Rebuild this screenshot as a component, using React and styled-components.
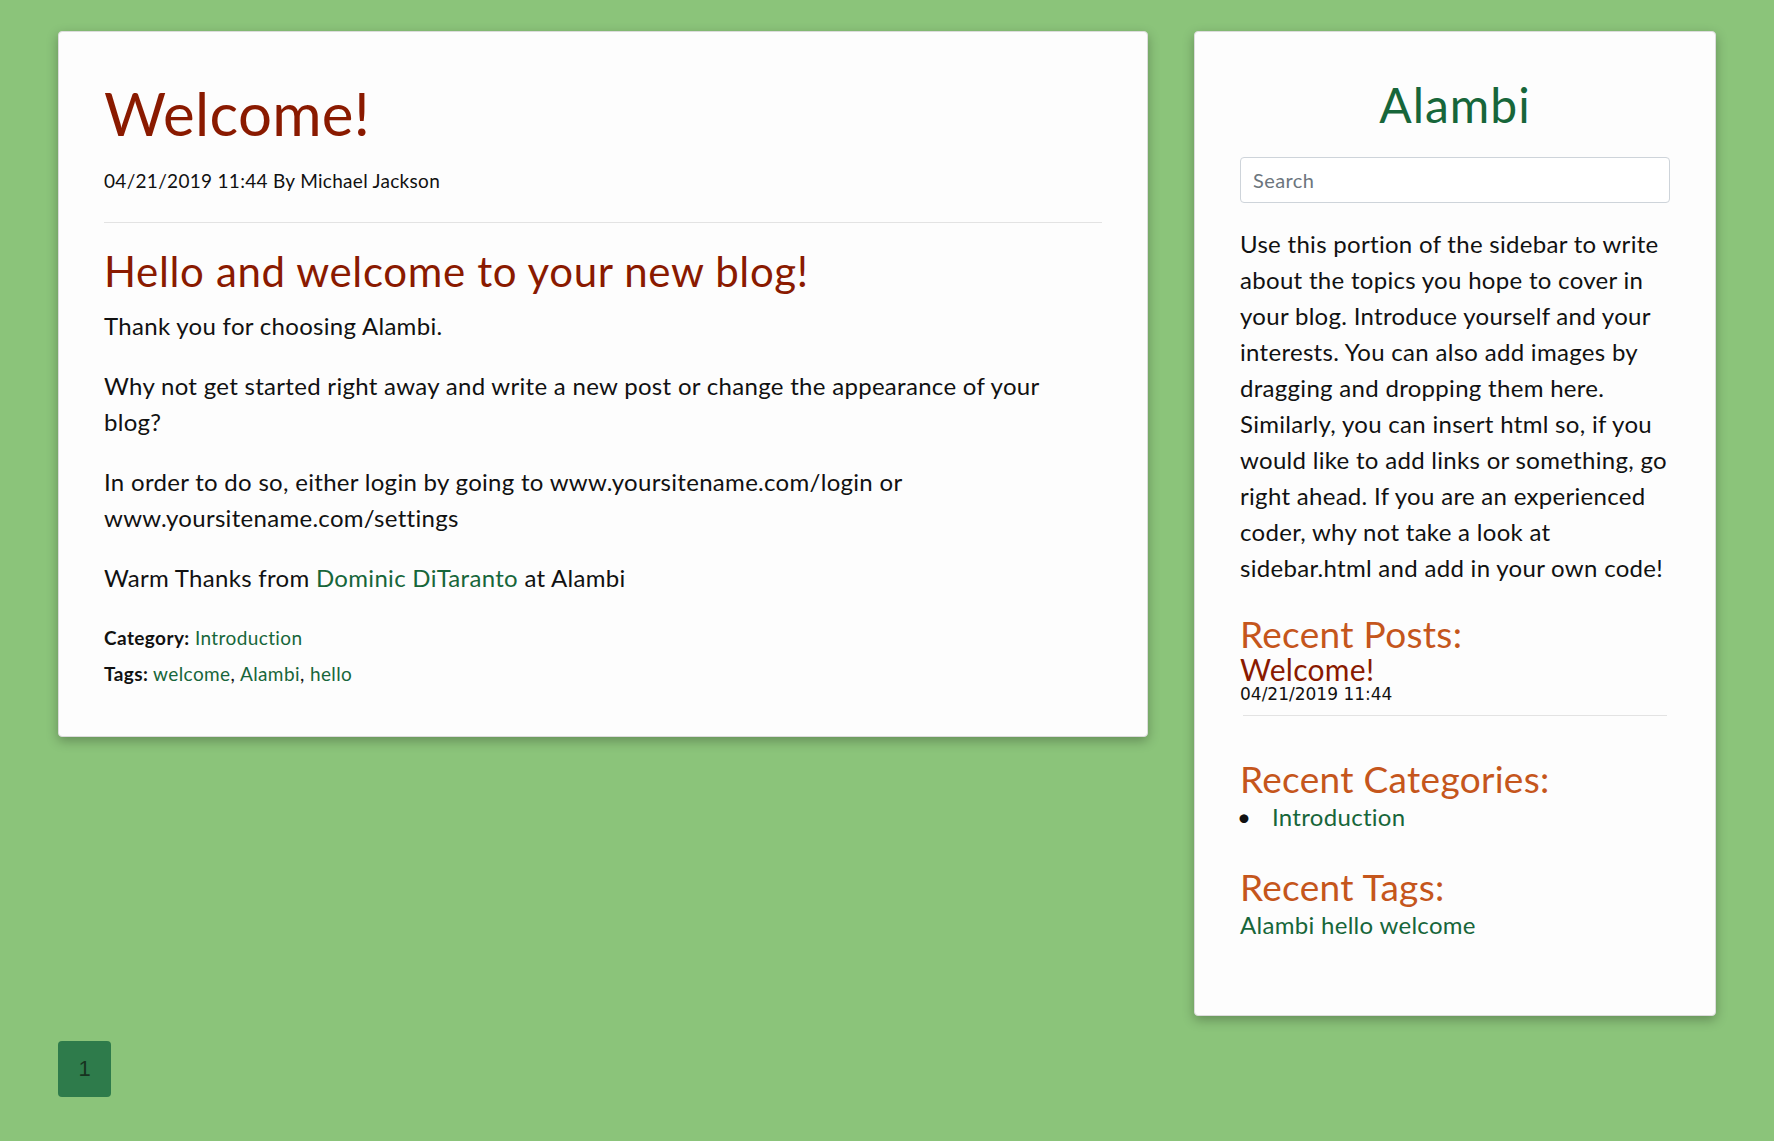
import React from "react";
import styled, { createGlobalStyle } from "styled-components";

const GlobalStyle = createGlobalStyle`
  body {
    margin: 0;
    background-color: #8bc47a;
    font-family: Lato, "Open Sans", sans-serif;
    letter-spacing: 0.3px;
    color: #111;
  }
`;

const Page = styled.div`
  padding: 31px 58px 40px;
`;

const Row = styled.div`
  display: flex;
  align-items: flex-start;
  gap: 46px;
`;

const Card = styled.div`
  box-sizing: border-box;
  background-color: #fdfdfd;
  border: 1px solid #dcdcdc;
  border-radius: 4px;
  box-shadow: 0 4px 12px rgba(0, 0, 0, 0.28);
  padding: 45px 45px 44px;
`;

const PostCard = styled(Card)`
  width: 1090px;
`;

const SideCard = styled(Card)`
  width: 522px;
  padding-bottom: 72px;
`;

const Title = styled.h1`
  margin: 0 0 18px;
  font-size: 60px;
  font-weight: 400;
  line-height: 72px;
  color: #8a1a00;
`;

const Meta = styled.div`
  font-size: 19px;
  line-height: 27px;
`;

const Rule = styled.hr`
  border: 0;
  border-top: 1px solid #e3e3e3;
  margin: ${(p) => p.$margin || "28px 0 23px"};
`;

const Subtitle = styled.h2`
  margin: 0 0 12px;
  font-size: 42px;
  font-weight: 400;
  line-height: 50px;
  letter-spacing: 0.65px;
  color: #8a1a00;
`;

const Text = styled.p`
  margin: 0 0 24px;
  font-size: 24px;
  line-height: 36px;
`;

const Link = styled.a`
  color: #17663a;
  text-decoration: none;
`;

const Info = styled.div`
  font-size: 19px;
  line-height: 36px;
  letter-spacing: 0.4px;
  margin-top: ${(p) => p.$top || 0}px;

  b {
    font-weight: 700;
  }
`;

const BrandTitle = styled.h1`
  margin: 0 0 24px;
  text-align: center;
  font-size: 48px;
  font-weight: 400;
  line-height: 56px;
  letter-spacing: 1px;
  color: #17663a;
`;

const Search = styled.input`
  box-sizing: border-box;
  display: block;
  width: 100%;
  height: 46px;
  padding: 0 12px;
  border: 1px solid #ced4da;
  border-radius: 4px;
  background: #fff;
  font-family: inherit;
  font-size: 20px;
  letter-spacing: 0.4px;
  color: #333;

  &::placeholder {
    color: #6c757d;
  }
`;

const SideText = styled(Text)`
  margin: 23px 0 0;
`;

const SideHeading = styled.h3`
  margin: ${(p) => p.$top}px 0 0;
  font-size: 37px;
  font-weight: 400;
  line-height: 41px;
  color: #c5561c;
`;

const RecentTitle = styled.div`
  font-size: 30px;
  line-height: 30px;
  color: #8a1a00;
`;

const RecentDate = styled.div`
  font-family: "DejaVu Sans", sans-serif;
  font-size: 17px;
  line-height: 20px;
  letter-spacing: 0;
`;

const CatList = styled.ul`
  margin: 0;
  padding: 0;
  list-style: none;
  font-size: 24px;
  line-height: 36px;
`;

const CatItem = styled.li`
  display: flex;

  &::before {
    content: "•";
    width: 32px;
    flex: none;
    margin-left: -3px;
    padding-right: 3px;
  }
`;

const TagLine = styled.div`
  font-size: 24px;
  line-height: 36px;
`;

const Pager = styled.div`
  display: flex;
  margin-top: 25px;
`;

const PageButton = styled.div`
  width: 53px;
  height: 56px;
  display: flex;
  align-items: center;
  justify-content: center;
  border-radius: 4px;
  background-color: #2e7b4b;
  color: #17331f;
  font-family: "Liberation Sans", Arial, sans-serif;
  font-size: 22px;
  letter-spacing: 0;
`;

const App = () => {
  return (
    <Page>
      <GlobalStyle />
      <Row>
        <PostCard>
          <Title>Welcome!</Title>
          <Meta>04/21/2019 11:44 By Michael Jackson</Meta>
          <Rule />
          <Subtitle>Hello and welcome to your new blog!</Subtitle>
          <Text>Thank you for choosing Alambi.</Text>
          <Text>
            Why not get started right away and write a new post or change the
            appearance of your blog?
          </Text>
          <Text>
            In order to do so, either login by going to
            www.yoursitename.com/login or www.yoursitename.com/settings
          </Text>
          <Text>
            Warm Thanks from <Link href="#">Dominic DiTaranto</Link> at Alambi
          </Text>
          <Info $top={5}>
            <b>Category:</b> <Link href="#">Introduction</Link>
          </Info>
          <Info>
            <b>Tags:</b> <Link href="#">welcome</Link>,{" "}
            <Link href="#">Alambi</Link>, <Link href="#">hello</Link>
          </Info>
        </PostCard>
        <SideCard>
          <BrandTitle>Alambi</BrandTitle>
          <Search placeholder="Search" />
          <SideText>
            Use this portion of the sidebar to write about the topics you hope
            to cover in your blog. Introduce yourself and your interests. You
            can also add images by dragging and dropping them here. Similarly,
            you can insert html so, if you would like to add links or
            something, go right ahead. If you are an experienced coder, why not
            take a look at sidebar.html and add in your own code!
          </SideText>
          <SideHeading $top={27}>Recent Posts:</SideHeading>
          <RecentTitle>Welcome!</RecentTitle>
          <RecentDate>04/21/2019 11:44</RecentDate>
          <Rule $margin="11px 3px 0" />
          <SideHeading $top={42}>Recent Categories:</SideHeading>
          <CatList>
            <CatItem>
              <Link href="#">Introduction</Link>
            </CatItem>
          </CatList>
          <SideHeading $top={31}>Recent Tags:</SideHeading>
          <TagLine>
            <Link href="#">Alambi hello welcome</Link>
          </TagLine>
        </SideCard>
      </Row>
      <Pager>
        <PageButton>1</PageButton>
      </Pager>
    </Page>
  );
};

export default App;
